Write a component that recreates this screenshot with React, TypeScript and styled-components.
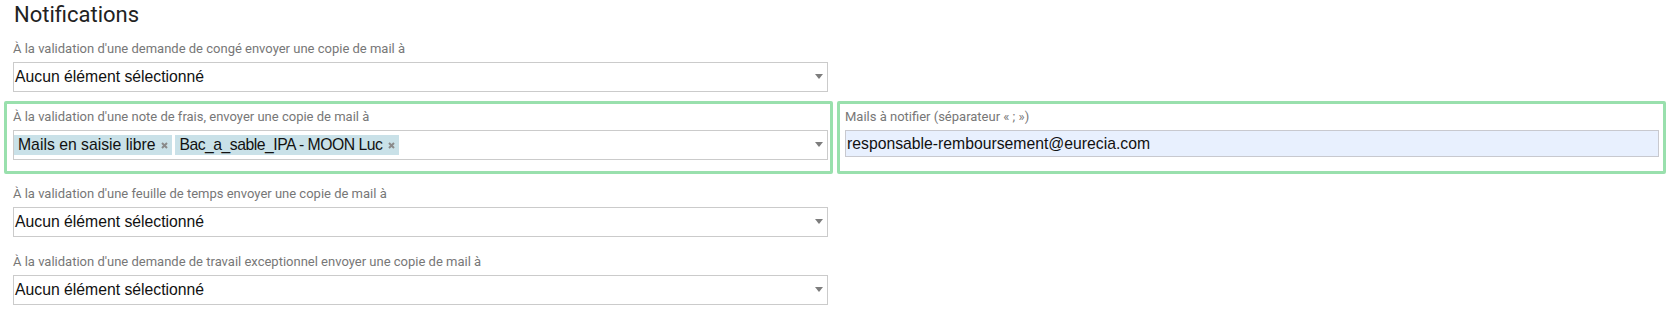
import React from "react";
import styled, { createGlobalStyle } from "styled-components";

const Global = createGlobalStyle`
  html, body { margin: 0; padding: 0; background: #fff; }
  body { font-family: Roboto, "Liberation Sans", Arial, sans-serif; }
  * { box-sizing: border-box; }
`;

const Page = styled.div`
  width: 1672px;
  height: 311px;
  padding: 0 6px 0 4px;
  overflow: hidden;
`;

const Heading = styled.h2`
  margin: 0;
  padding: 3px 0 0 10px;
  font-family: Roboto, sans-serif;
  font-weight: 400;
  font-size: 22px;
  line-height: 24px;
  color: #222;
`;

const Row = styled.div<{ $top: number }>`
  display: flex;
  gap: 4px;
  margin-top: ${(p) => p.$top}px;
`;

const Column = styled.div<{ $highlight?: boolean; $padL: number; $padR: number }>`
  width: 829px;
  flex: none;
  display: flex;
  flex-direction: column;
  padding: ${(p) => (p.$highlight ? "3px" : "0")} ${(p) => p.$padR}px
    ${(p) => (p.$highlight ? "11px" : "0")} ${(p) => p.$padL}px;
  border: ${(p) => (p.$highlight ? "3px solid #99e0ad" : "none")};
  border-radius: ${(p) => (p.$highlight ? "2px" : "0")};
`;

const Label = styled.label`
  display: block;
  font-family: Roboto, sans-serif;
  font-size: 13px;
  line-height: 20px;
  height: 20px;
  color: #777;
  margin-bottom: 3px;
  white-space: nowrap;
`;

const SelectBox = styled.div`
  width: 815px;
  min-height: 30px;
  display: flex;
  align-items: center;
  border: 1px solid #cbcbcb;
  background: #fff;
  padding: 0 4px 0 1px;
  font-family: "Liberation Sans", Arial, sans-serif;
  font-size: 15.75px;
  color: #111;
`;

const Placeholder = styled.span`
  flex: 1;
  line-height: 28px;
  white-space: nowrap;
`;

const TagList = styled.div`
  flex: 1;
  display: flex;
  gap: 3px;
  padding: 3px 0;
  margin-left: -1px;
`;

const Tag = styled.span<{ $tight?: boolean }>`
  display: inline-flex;
  align-items: center;
  gap: 6px;
  height: 20px;
  padding: 0 4px;
  background: #c9e1e8;
  line-height: 20px;
  white-space: nowrap;
  letter-spacing: ${(p) => (p.$tight ? "-0.5px" : "0")};
`;

const TagClose = styled.svg`
  width: 7px;
  height: 7px;
  flex: none;
`;

const Caret = styled.span`
  width: 0;
  height: 0;
  border-left: 4px solid transparent;
  border-right: 4px solid transparent;
  border-top: 5px solid #7d7d7d;
  margin-top: -2px;
  flex: none;
`;

const TextInput = styled.input`
  width: 814px;
  height: 27px;
  border: 1px solid #c8c9cf;
  background: #e8f0fe;
  padding: 0 0 0 1px;
  font-family: "Liberation Sans", Arial, sans-serif;
  font-size: 15.75px;
  color: #111;
  outline: none;
`;

const Close = () => (
  <TagClose viewBox="0 0 7 7">
    <path d="M1 1 L6 6 M6 1 L1 6" stroke="#8a8a8a" strokeWidth="2" />
  </TagClose>
);

const EmptySelect = ({ label }: { label: string }) => (
  <>
    <Label>{label}</Label>
    <SelectBox>
      <Placeholder>Aucun élément sélectionné</Placeholder>
      <Caret />
    </SelectBox>
  </>
);

export default function App() {
  return (
    <Page>
      <Global />
      <Heading>Notifications</Heading>
      <Row $top={12}>
        <Column $padL={9} $padR={0}>
          <EmptySelect label="À la validation d'une demande de congé envoyer une copie de mail à" />
        </Column>
      </Row>
      <Row $top={9}>
        <Column $highlight $padL={6} $padR={2}>
          <Label>À la validation d'une note de frais, envoyer une copie de mail à</Label>
          <SelectBox>
            <TagList>
              <Tag>
                Mails en saisie libre
                <Close />
              </Tag>
              <Tag $tight>
                Bac_a_sable_IPA - MOON Luc
                <Close />
              </Tag>
            </TagList>
            <Caret />
          </SelectBox>
        </Column>
        <Column $highlight $padL={5} $padR={4}>
          <Label>Mails à notifier (séparateur « ; »)</Label>
          <TextInput readOnly value="responsable-remboursement@eurecia.com" />
        </Column>
      </Row>
      <Row $top={10}>
        <Column $padL={9} $padR={0}>
          <EmptySelect label="À la validation d'une feuille de temps envoyer une copie de mail à" />
        </Column>
      </Row>
      <Row $top={15}>
        <Column $padL={9} $padR={0}>
          <EmptySelect label="À la validation d'une demande de travail exceptionnel envoyer une copie de mail à" />
        </Column>
      </Row>
    </Page>
  );
}
